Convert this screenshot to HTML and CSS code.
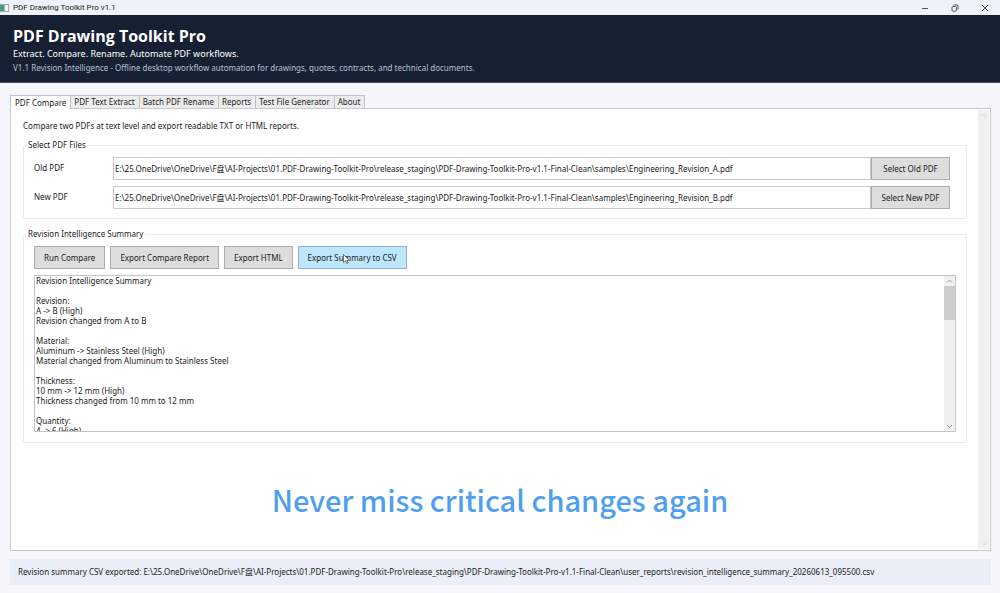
FILE: index.html
```html
<!DOCTYPE html>
<html lang="en">
<head>
    <meta charset="UTF-8">
    <meta name="viewport" content="width=device-width, initial-scale=1.0">
    <title>PDF Drawing Toolkit Pro v1.1</title>
    <link rel="stylesheet" href="styles.css">
</head>
<body>
    <div class="titlebar">
        <svg class="app-icon" width="9" height="8" viewBox="0 0 9 8">
            <rect x="0" y="0" width="9" height="8" fill="#a3abae"/>
            <rect x="0" y="1" width="4" height="6" fill="#4f978a"/>
            <rect x="5" y="1" width="3" height="6" fill="#f4f7f7"/>
        </svg>
        <span class="window-title">PDF Drawing Toolkit Pro v1.1</span>
        <div class="window-controls">
            <button type="button" aria-label="Minimize">
                <svg width="8" height="8" viewBox="0 0 8 8"><path d="M1 4.500h6"/></svg>
            </button>
            <button type="button" aria-label="Restore">
                <svg width="8" height="8" viewBox="0 0 8 8"><path d="M1 3.200q0-.7.7-.7h3q.7 0 .7.7v3.300q0 .7-.7.7h-3q-.7 0-.7-.7zM2.500 1h3.500q1 0 1 1v3.500"/></svg>
            </button>
            <button type="button" aria-label="Close">
                <svg width="8" height="8" viewBox="0 0 8 8"><path d="M1 1l6 6M7 1l-6 6"/></svg>
            </button>
        </div>
    </div>
    <header>
        <h1>PDF Drawing Toolkit Pro</h1>
        <p class="tagline">Extract. Compare. Rename. Automate PDF workflows.</p>
        <p class="edition">V1.1 Revision Intelligence - Offline desktop workflow automation for drawings, quotes, contracts, and technical documents.</p>
    </header>
    <main>
        <div class="tabs" role="tablist">
            <button type="button" role="tab" class="tab active" aria-selected="true">PDF Compare</button>
            <button type="button" role="tab" class="tab">PDF Text Extract</button>
            <button type="button" role="tab" class="tab">Batch PDF Rename</button>
            <button type="button" role="tab" class="tab">Reports</button>
            <button type="button" role="tab" class="tab">Test File Generator</button>
            <button type="button" role="tab" class="tab">About</button>
        </div>
        <div class="panel">
            <div class="content">
                <p class="intro">Compare two PDFs at text level and export readable TXT or HTML reports.</p>
                <fieldset>
                    <legend>Select PDF Files</legend>
                    <div class="file-row">
                        <label for="old-pdf">Old PDF</label>
                        <input type="text" id="old-pdf" value="E:\25.OneDrive\OneDrive\F盘\AI-Projects\01.PDF-Drawing-Toolkit-Pro\release_staging\PDF-Drawing-Toolkit-Pro-v1.1-Final-Clean\samples\Engineering_Revision_A.pdf">
                        <button type="button" class="btn">Select Old PDF</button>
                    </div>
                    <div class="file-row">
                        <label for="new-pdf">New PDF</label>
                        <input type="text" id="new-pdf" value="E:\25.OneDrive\OneDrive\F盘\AI-Projects\01.PDF-Drawing-Toolkit-Pro\release_staging\PDF-Drawing-Toolkit-Pro-v1.1-Final-Clean\samples\Engineering_Revision_B.pdf">
                        <button type="button" class="btn">Select New PDF</button>
                    </div>
                </fieldset>
                <fieldset>
                    <legend>Revision Intelligence Summary</legend>
                    <div class="actions">
                        <button type="button" class="btn">Run Compare</button>
                        <button type="button" class="btn">Export Compare Report</button>
                        <button type="button" class="btn">Export HTML</button>
                        <button type="button" class="btn hover">Export Summary to CSV
                            <svg class="cursor" width="7" height="11" viewBox="0 0 7 11"><path d="M.5.5v8l2-1.800 1.300 3 1.300-.6-1.300-2.900h2.600z" fill="#fff" stroke="#444" stroke-width=".7"/></svg>
                        </button>
                    </div>
                    <div class="summary">
                        <textarea aria-label="Revision Intelligence Summary" readonly>Revision Intelligence Summary

Revision:
A -&gt; B (High)
Revision changed from A to B

Material:
Aluminum -&gt; Stainless Steel (High)
Material changed from Aluminum to Stainless Steel

Thickness:
10 mm -&gt; 12 mm (High)
Thickness changed from 10 mm to 12 mm

Quantity:
4 -&gt; 6 (High)</textarea>
                        <div class="scrollbar">
                            <svg width="7" height="10" viewBox="0 0 7 10"><path d="M1 6.500l2.500-2.500 2.500 2.500"/></svg>
                            <div class="thumb"></div>
                            <svg width="7" height="10" viewBox="0 0 7 10"><path d="M1 4l2.500 2.500 2.500-2.500"/></svg>
                        </div>
                    </div>
                </fieldset>
            </div>
            <div class="scrollbar disabled">
                <svg width="7" height="10" viewBox="0 0 7 10"><path d="M1 6.500l2.500-2.500 2.500 2.500"/></svg>
                <svg width="7" height="10" viewBox="0 0 7 10"><path d="M1 4l2.500 2.500 2.500-2.500"/></svg>
            </div>
        </div>
    </main>
    <footer>Revision summary CSV exported: E:\25.OneDrive\OneDrive\F盘\AI-Projects\01.PDF-Drawing-Toolkit-Pro\release_staging\PDF-Drawing-Toolkit-Pro-v1.1-Final-Clean\user_reports\revision_intelligence_summary_20260613_095500.csv</footer>
    <p class="caption">Never miss critical changes again</p>
</body>
</html>
```

FILE: styles.css
```css
* {
    box-sizing: border-box;
}
body {
    position: relative;
    font-family: "Noto Sans", "Noto Sans CJK SC", sans-serif;
    font-size: 8px;
    line-height: 10px;
    color: #222;
    background-color: #f4f6fb;
    margin: 0;
    display: flex;
    flex-direction: column;
    min-height: 100vh;
}
h1, p {
    margin: 0;
}
button, input, textarea {
    font: inherit;
    color: inherit;
    margin: 0;
    border-radius: 0;
    outline: none;
}
.titlebar {
    display: flex;
    align-items: center;
    height: 15px;
    background-color: #edf3f8;
}
.app-icon {
    margin-right: 4px;
}
.window-title {
    font-family: Roboto, sans-serif;
}
.window-controls {
    display: flex;
    margin-left: auto;
}
.window-controls button {
    display: flex;
    justify-content: center;
    width: 30px;
    padding: 0;
    border: none;
    background: none;
}
.window-controls path {
    fill: none;
    stroke: #555;
}
header {
    background-color: #172033;
    color: #fff;
    height: 68px;
    padding: 10px 13px;
    border-bottom: 1px solid #475064;
}
h1 {
    font-family: "Open Sans", sans-serif;
    font-size: 16px;
    line-height: 22px;
}
.tagline {
    font-size: 9px;
    line-height: 14px;
}
.edition {
    color: #b5c0d2;
    line-height: 14px;
}
main {
    display: flex;
    flex-direction: column;
    flex: 1;
    padding: 12px 9px 8px 10px;
}
.tabs {
    display: flex;
    align-items: flex-end;
}
.tab {
    height: 13px;
    padding: 0 4px 0 3px;
    border: 1px solid #c4c4c8;
    border-left: none;
    border-bottom: none;
    background-color: #ececec;
    line-height: 10px;
}
.tab.active {
    height: 14px;
    padding: 0 4px;
    border-left: 1px solid #c4c4c8;
    margin-bottom: -1px;
    z-index: 1;
    background-color: #fff;
}
.panel {
    display: flex;
    flex: 1;
    padding: 1px;
    border: 1px solid #c8c8ce;
    background-color: #fff;
}
.content {
    flex: 1;
    padding: 11px 11px 0;
}
.intro {
    margin-bottom: 9px;
}
fieldset {
    margin: 0 0 10px;
    padding: 7px 16px 9px 10px;
    border: 1px solid #ebebeb;
    border-radius: 2px;
}
fieldset + fieldset {
    padding: 7px 10px 10px;
}
legend {
    margin-left: -8px;
    padding: 0 2px;
    line-height: 10px;
}
.file-row {
    display: flex;
    height: 23px;
}
.file-row + .file-row {
    margin-top: 6px;
}
.file-row label {
    width: 79px;
    line-height: 22px;
}
.file-row input {
    flex: 1;
    padding: 0 1px;
    border: 1px solid #c8c8c8;
    background-color: #fff;
}
.file-row .btn {
    width: 79px;
}
.btn {
    position: relative;
    height: 23px;
    padding: 0 9px;
    border: 1px solid #adadad;
    background-color: #ddd;
    white-space: nowrap;
}
.btn.hover {
    border-color: #8ab4cf;
    background-color: #bee6fd;
}
.cursor {
    position: absolute;
    left: 44px;
    top: 7px;
}
.actions {
    display: flex;
    gap: 5px;
}
.summary {
    display: flex;
    height: 157px;
    margin-top: 6px;
    border: 1px solid #c4c4c4;
}
.summary textarea {
    flex: 1;
    padding: 0 1px;
    border: none;
    resize: none;
    overflow: hidden;
    background-color: #fff;
}
.scrollbar {
    display: flex;
    flex-direction: column;
    align-items: center;
    width: 11px;
    background-color: #f0f0f0;
}
.scrollbar path {
    fill: none;
    stroke: #999;
}
.scrollbar svg:last-child {
    margin-top: auto;
}
.scrollbar.disabled path {
    stroke: #d6d6d6;
}
.thumb {
    width: 100%;
    height: 34px;
    background-color: #cdcdcd;
}
.caption {
    position: absolute;
    left: 0;
    right: 0;
    bottom: 74px;
    font-family: "Noto Sans CJK SC", sans-serif;
    font-size: 29px;
    font-weight: 500;
    line-height: 40px;
    text-align: center;
    color: #4f9fee;
}
footer {
    margin: 0 9px 8px 10px;
    padding: 8px;
    background-color: #e9eef7;
}
```
